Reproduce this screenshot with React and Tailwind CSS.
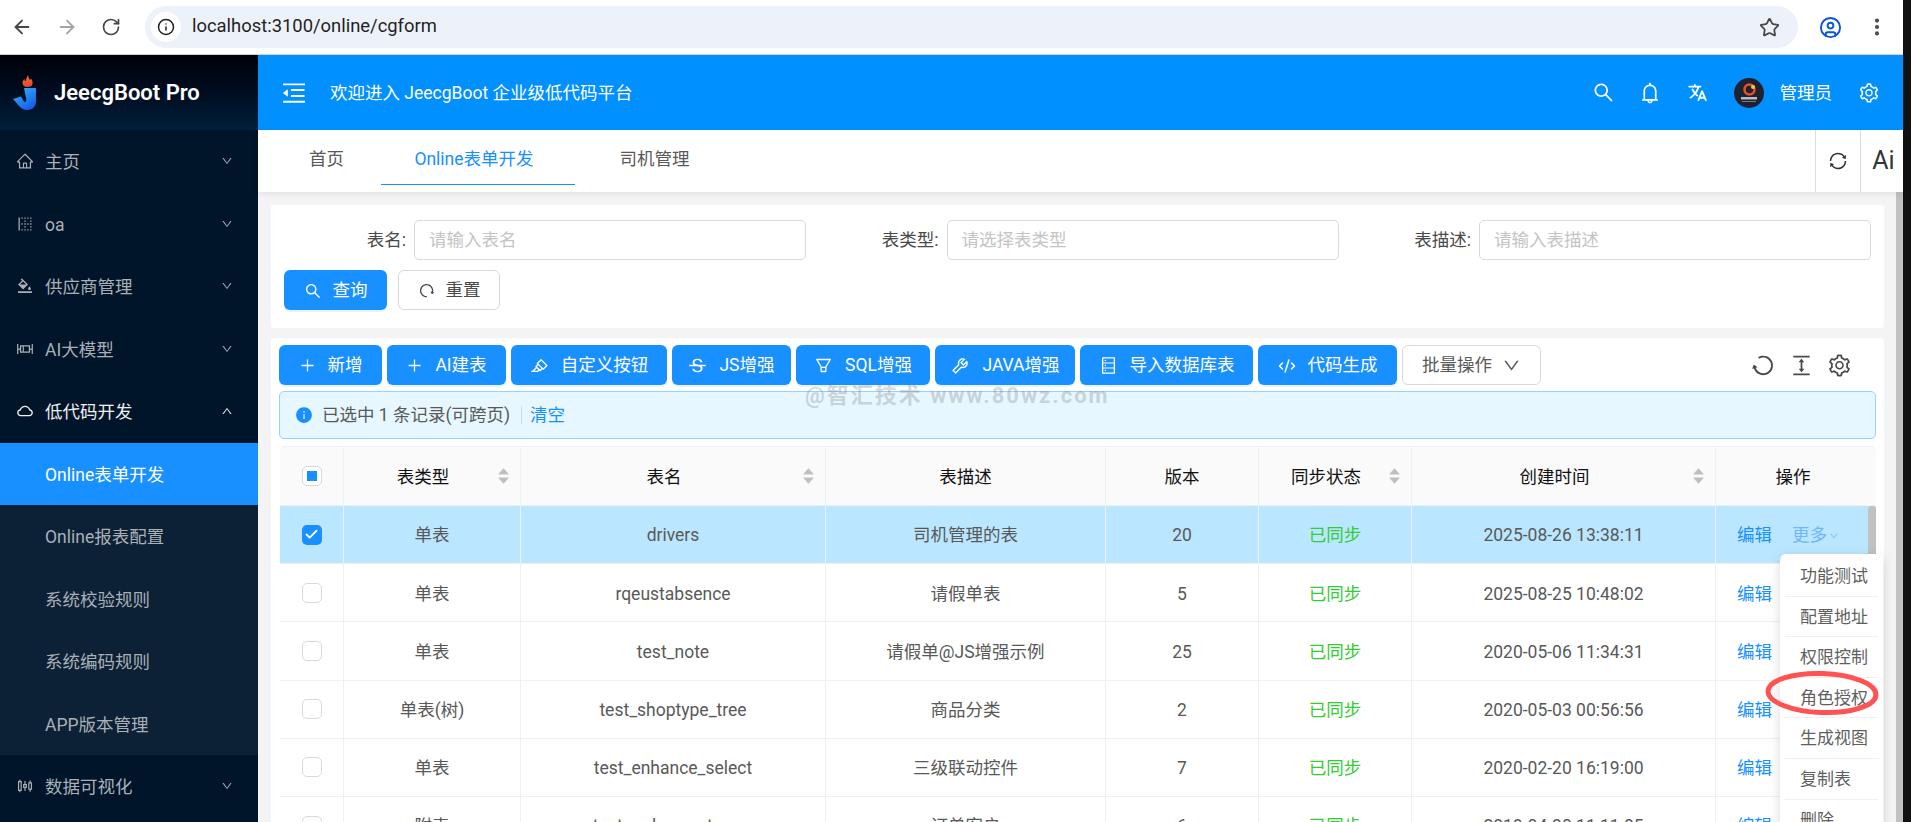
import React from "react";
import {
  AiOutlineHome, AiOutlineBorderLeft, AiOutlineBgColors, AiOutlineBoxPlot, AiOutlineCloud, AiOutlineSliders,
  AiOutlineDown, AiOutlineUp, AiOutlineSearch, AiOutlineBell, AiOutlineSetting, AiOutlineSync, AiOutlineMenuFold,
  AiOutlinePlus, AiOutlineHighlight, AiOutlineStrikethrough, AiOutlineFilter, AiOutlineTool,
  AiOutlineDatabase, AiOutlineRedo, AiOutlineColumnHeight, AiFillInfoCircle, AiFillCaretUp, AiFillCaretDown,
} from "react-icons/ai";
import { IoLanguage } from "react-icons/io5";
import { ArrowLeft, ArrowRight, RotateCw, Info, Star, CircleUser, EllipsisVertical, Check, CodeXml } from "lucide-react";

const menuTop = [
  { icon: AiOutlineHome, label: "主页" },
  { icon: AiOutlineBorderLeft, label: "oa" },
  { icon: AiOutlineBgColors, label: "供应商管理" },
  { icon: AiOutlineBoxPlot, label: "AI大模型" },
];
const subMenu = ["Online报表配置", "系统校验规则", "系统编码规则", "APP版本管理"];

const buttons = [
  { icon: AiOutlinePlus, label: "新增", w: "w-[103px]", s: "h-[17px] w-[17px]" },
  { icon: AiOutlinePlus, label: "AI建表", w: "w-[119px]", s: "h-[17px] w-[17px]" },
  { icon: AiOutlineHighlight, label: "自定义按钮", w: "w-[156px]", s: "h-[19px] w-[19px]" },
  { icon: AiOutlineStrikethrough, label: "JS增强", w: "w-[119px]", s: "h-[19px] w-[19px]" },
  { icon: AiOutlineFilter, label: "SQL增强", w: "w-[134px]", s: "h-[19px] w-[19px]" },
  { icon: AiOutlineTool, label: "JAVA增强", w: "w-[140px]", s: "h-[20px] w-[20px]" },
  { icon: AiOutlineDatabase, label: "导入数据库表", w: "w-[173px]", s: "h-[19px] w-[19px]" },
  { icon: CodeXml, label: "代码生成", w: "w-[139px]", s: "h-[18px] w-[18px]" },
];

const rows = [
  ["单表", "drivers", "司机管理的表", "20", "2025-08-26 13:38:11"],
  ["单表", "rqeustabsence", "请假单表", "5", "2025-08-25 10:48:02"],
  ["单表", "test_note", "请假单@JS增强示例", "25", "2020-05-06 11:34:31"],
  ["单表(树)", "test_shoptype_tree", "商品分类", "2", "2020-05-03 00:56:56"],
  ["单表", "test_enhance_select", "三级联动控件", "7", "2020-02-20 16:19:00"],
  ["附表", "test_order_customer", "订单客户", "6", "2019-04-30 11:11:05"],
];

const dropdown = ["功能测试", "配置地址", "权限控制", "角色授权", "生成视图", "复制表", "删除"];

const gridCols = "grid grid-cols-[64px_177px_305px_280px_153px_153px_304px_160px]";

function Logo() {
  return (
    <svg width="24" height="36" viewBox="0 0 24 36" className="shrink-0">
      <defs>
        <linearGradient id="jg" x1="0" y1="0" x2="0.6" y2="1">
          <stop offset="0" stopColor="#38b6ff" />
          <stop offset="1" stopColor="#1560e8" />
        </linearGradient>
        <linearGradient id="fg" x1="0" y1="0" x2="0" y2="1">
          <stop offset="0" stopColor="#f0703a" />
          <stop offset="1" stopColor="#e8452c" />
        </linearGradient>
      </defs>
      <path d="M16 0c.5 3 1 3.500 2 5 .5-.5.7-1 .8-1.500 1.700 1.700 2.200 4 1.500 6-.7 1.800-2.300 2.500-4.800 2.500s-4.500-1-5-3.500c-.3-2 .7-3.500 2-4.500 0 1.300.3 2 1 2.200C14 4 15 2 16 0z" fill="url(#fg)" />
      <path d="M12 13h12v13c0 5.500-3.500 9-8.500 9-3.500 0-6-1.500-8-3.500L1 24l8-2.500 3 5c1 1 2.500 0 2.300-2L12 13z" fill="url(#jg)" />
    </svg>
  );
}

function Avatar() {
  return (
    <svg width="30" height="30" viewBox="0 0 30 30" className="block shrink-0">
      <circle cx="15" cy="15" r="15" fill="#1d2130" />
      <circle cx="15.500" cy="11.500" r="5" fill="none" stroke="#e8502a" strokeWidth="2.500" />
      <circle cx="19" cy="9" r="2" fill="#f6c944" />
      <rect x="7" y="19" width="16" height="2.500" fill="#b9bcc4" />
      <rect x="8" y="23" width="14" height="1" fill="#777b86" />
    </svg>
  );
}

function Sorter() {
  return (
    <span className="absolute right-[9px] top-1/2 flex -translate-y-1/2 flex-col items-center text-[#bfbfbf]">
      <AiFillCaretUp className="-mb-[3px] h-[15px] w-[15px]" />
      <AiFillCaretDown className="-mt-[3px] h-[15px] w-[15px]" />
    </span>
  );
}

function HeadCell({ children, sort, offset }) {
  return (
    <div className="relative flex items-center justify-center border-r border-[#f0f0f0] pt-[2px] font-normal text-[#111] last:border-r-0">
      <span className={offset}>{children}</span>
      {sort && <Sorter />}
    </div>
  );
}

function Cell({ children, className = "" }) {
  return (
    <div className={`flex items-center justify-center border-r border-[#f0f0f0] pt-[2px] ${className}`}>{children}</div>
  );
}

function FormItem({ label, placeholder }) {
  return (
    <div className="flex w-[532.5px] items-center">
      <label className="w-[133px] whitespace-nowrap pr-[8px] text-right text-[#4a4a4a]">{label}:</label>
      <div className="flex h-[40px] w-[392px] items-center rounded-[5px] border border-[#d9d9d9] bg-white px-[14px] pt-[1px] text-[#c4c4c4]">
        {placeholder}
      </div>
    </div>
  );
}

export default function App() {
  return (
    <div className="relative flex h-[822px] w-full overflow-hidden bg-[#111] font-['Roboto','Noto_Sans_CJK_SC',sans-serif] text-[17.5px] text-[#595959]">
      <div className="flex w-[1903px] shrink-0 flex-col">
        {/* browser chrome */}
        <div className="flex h-[55px] shrink-0 items-center border-b border-[#d3d3d3] bg-white">
          <div className="flex w-[145px] shrink-0 items-center pl-[11px] text-[#474747]">
            <ArrowLeft className="h-[22px] w-[22px]" strokeWidth={2} />
            <ArrowRight className="ml-[23px] h-[22px] w-[22px] text-[#a5a5a5]" strokeWidth={2} />
            <RotateCw className="ml-[23px] h-[20px] w-[20px]" strokeWidth={2} />
          </div>
          <div className="flex h-[42px] w-[1653px] items-center rounded-full bg-[#edf2fa] pl-[6px] pr-[18px]">
            <span className="flex h-[30px] w-[30px] items-center justify-center rounded-full bg-white text-[#1f1f1f]">
              <Info className="h-[18px] w-[18px]" strokeWidth={2} />
            </span>
            <span className="ml-[11px] pb-[2px] text-[18.4px] text-[#1f1f1f]">localhost:3100/online/cgform</span>
            <Star className="ml-auto h-[21px] w-[21px] text-[#474747]" strokeWidth={2} />
          </div>
          <CircleUser className="ml-[21px] h-[23px] w-[23px] text-[#0b57d0]" strokeWidth={2} />
          <EllipsisVertical className="ml-[24px] h-[22px] w-[22px] text-[#474747]" strokeWidth={2.500} />
        </div>

        <div className="flex min-h-0 flex-1">
          {/* sidebar */}
          <aside className="flex w-[258px] shrink-0 flex-col bg-[#001529] text-[#a9b0b8]">
            <div className="flex h-[75px] shrink-0 items-center bg-gradient-to-b from-[#000208] to-[#011f3c] pl-[12px]">
              <Logo />
              <span className="ml-[18px] text-[22px] font-semibold text-white">JeecgBoot Pro</span>
            </div>
            {menuTop.map((m) => (
              <div key={m.label} className="flex h-[62.5px] shrink-0 items-center pl-[16px] pr-[25px]">
                <m.icon className="h-[18px] w-[18px]" />
                <span className="ml-[11px] pt-[2px]">{m.label}</span>
                <AiOutlineDown className="ml-auto h-[12px] w-[12px]" />
              </div>
            ))}
            <div className="flex h-[62.5px] shrink-0 items-center pl-[16px] pr-[25px] text-[#eef0f2]">
              <AiOutlineCloud className="h-[18px] w-[18px]" />
              <span className="ml-[11px] pt-[2px]">低代码开发</span>
              <AiOutlineUp className="ml-auto h-[12px] w-[12px]" />
            </div>
            <div className="bg-[#0c2135]">
              <div className="flex h-[62.5px] items-center bg-[#1890ff] pl-[45px] pt-[2px] text-white">Online表单开发</div>
              {subMenu.map((s) => (
                <div key={s} className="flex h-[62.5px] items-center pl-[45px] pt-[2px]">{s}</div>
              ))}
            </div>
            <div className="flex h-[62.5px] shrink-0 items-center pl-[16px] pr-[25px]">
              <AiOutlineSliders className="h-[18px] w-[18px]" />
              <span className="ml-[11px] pt-[2px]">数据可视化</span>
              <AiOutlineDown className="ml-auto h-[12px] w-[12px]" />
            </div>
          </aside>

          {/* main */}
          <div className="flex min-w-0 flex-1 flex-col">
            <header className="flex h-[75px] shrink-0 items-center bg-[#0090ff] text-white">
              <AiOutlineMenuFold className="ml-[22px] h-[28px] w-[28px]" />
              <span className="ml-[22px] pt-[1px]">欢迎进入 JeecgBoot 企业级低代码平台</span>
              <div className="ml-auto flex items-center pr-[23px]">
                <AiOutlineSearch className="h-[23px] w-[23px]" />
                <AiOutlineBell className="ml-[23px] h-[24px] w-[24px]" />
                <IoLanguage className="ml-[25px] h-[21px] w-[21px]" />
                <span className="ml-[26px]"><Avatar /></span>
                <span className="ml-[16px] pt-[1px]">管理员</span>
                <AiOutlineSetting className="ml-[26px] h-[22px] w-[22px]" />
              </div>
            </header>

            {/* tabs */}
            <div className="relative z-10 flex h-[62px] shrink-0 items-stretch bg-white pl-[14px] shadow-[0_2px_6px_rgba(0,0,0,0.08)]">
              <div className="flex h-[55px] w-[109px] items-center justify-center pt-[4px] text-[#595959]">首页</div>
              <div className="flex h-[55px] w-[194px] items-center justify-center border-b border-[#1890ff] pt-[4px]">
                <span className="-ml-[8px] text-[#1890ff]">Online表单开发</span>
              </div>
              <div className="flex h-[55px] w-[159px] items-center justify-center pt-[4px] text-[#595959]">司机管理</div>
              <div className="ml-auto flex w-[45px] items-center justify-center border-l border-[#dcdcdc] text-[#333]">
                <AiOutlineSync className="h-[20px] w-[20px]" />
              </div>
              <div className="flex w-[43px] items-center justify-center border-l border-[#dcdcdc] pl-[3px] text-[25px] text-[#333]">Ai</div>
            </div>

            <div className="flex min-h-0 flex-1 bg-[#f4f4f4]">
              <div className="flex min-w-0 flex-1 flex-col pl-[13px] pr-[12px] pt-[13px]">
                {/* search card */}
                <div className="h-[123px] shrink-0 rounded-[3px] bg-white">
                  <div className="flex pl-[10px] pt-[15px]">
                    <FormItem label="表名" placeholder="请输入表名" />
                    <FormItem label="表类型" placeholder="请选择表类型" />
                    <FormItem label="表描述" placeholder="请输入表描述" />
                  </div>
                  <div className="mt-[10px] flex gap-[11px] pl-[13px]">
                    <button className="flex h-[40px] w-[103px] items-center justify-center gap-[11px] rounded-[6px] bg-[#1890ff] pt-[1px] text-white shadow-[0_2px_0_rgba(5,145,255,0.1)]">
                      <AiOutlineSearch className="h-[18px] w-[18px]" />查询
                    </button>
                    <button className="flex h-[40px] w-[102px] items-center justify-center gap-[11px] rounded-[6px] border border-[#d9d9d9] bg-white pt-[1px] text-[#4a4a4a]">
                      <AiOutlineRedo className="h-[17px] w-[17px] -rotate-[40deg]" />重置
                    </button>
                  </div>
                </div>

                {/* table card */}
                <div className="relative mt-[10px] min-h-0 flex-1 rounded-t-[3px] bg-white pl-[8px] pt-[7px]">
                  <div className="flex h-[40px] w-[1597px] items-center gap-[5px]">
                    {buttons.map((b) => (
                      <button key={b.label} className={`flex h-[40px] ${b.w} items-center justify-center gap-[12px] rounded-[6px] bg-[#1890ff] pt-[1px] text-white shadow-[0_2px_0_rgba(5,145,255,0.1)]`}>
                        <b.icon className={b.s} />
                        {b.label}
                      </button>
                    ))}
                    <button className="flex h-[40px] w-[139px] items-center justify-center gap-[10px] rounded-[6px] border border-[#d9d9d9] bg-white pt-[1px] text-[#595959]">
                      批量操作<AiOutlineDown className="h-[19px] w-[19px]" />
                    </button>
                    <div className="ml-auto flex items-center gap-[13px] pr-[24px] text-[#4a4a4a]">
                      <AiOutlineRedo className="h-[25px] w-[25px] rotate-[110deg]" />
                      <AiOutlineColumnHeight className="h-[25px] w-[25px]" />
                      <AiOutlineSetting className="h-[25px] w-[25px]" />
                    </div>
                  </div>

                  {/* alert */}
                  <div className="mt-[6px] flex h-[48px] w-[1597px] items-center rounded-[5px] border border-[#91d5ff] bg-[#e6f7ff] pl-[15px]">
                    <AiFillInfoCircle className="h-[18px] w-[18px] text-[#1890ff]" />
                    <span className="ml-[9px] pt-[1px] text-[#595959]">已选中 1 条记录(可跨页)</span>
                    <span className="ml-[11px] h-[18px] w-px bg-[#d9d9d9]" />
                    <span className="ml-[8px] pt-[1px] text-[#1890ff]">清空</span>
                  </div>

                  {/* table */}
                  <div className="relative ml-[1px] mt-[7px] w-[1596px]">
                    <div className={`${gridCols} h-[60px] rounded-t-[5px] border-t border-b border-[#f0f0f0] bg-[#fafafa]`}>
                      <HeadCell>
                        <span className="-mt-[2px] flex h-[20px] w-[20px] items-center justify-center rounded-[5px] border border-[#d9d9d9] bg-white">
                          <span className="h-[10px] w-[10px] bg-[#1890ff]" />
                        </span>
                      </HeadCell>
                      <HeadCell sort offset="-ml-[18px]">表类型</HeadCell>
                      <HeadCell sort offset="-ml-[18px]">表名</HeadCell>
                      <HeadCell>表描述</HeadCell>
                      <HeadCell>版本</HeadCell>
                      <HeadCell sort offset="-ml-[18px]">同步状态</HeadCell>
                      <HeadCell sort offset="-ml-[18px]">创建时间</HeadCell>
                      <HeadCell><span className="-ml-[6px]">操作</span></HeadCell>
                    </div>
                    {rows.map((r, i) => (
                      <div key={r[1]} className={`${gridCols} h-[58.2px] border-b border-[#f0f0f0] ${i === 0 ? "bg-[#bae7ff]" : "bg-white"}`}>
                        <Cell>
                          {i === 0 ? (
                            <span className="-mt-[2px] flex h-[20px] w-[20px] items-center justify-center rounded-[5px] bg-[#1890ff] text-white">
                              <Check className="h-[15px] w-[15px]" strokeWidth={3} />
                            </span>
                          ) : (
                            <span className="-mt-[2px] h-[20px] w-[20px] rounded-[5px] border border-[#d9d9d9] bg-white" />
                          )}
                        </Cell>
                        <Cell>{r[0]}</Cell>
                        <Cell>{r[1]}</Cell>
                        <Cell>{r[2]}</Cell>
                        <Cell>{r[3]}</Cell>
                        <Cell className="text-[#32cd32]">已同步</Cell>
                        <Cell>{r[4]}</Cell>
                        <div className="flex items-center pl-[21px] pt-[2px]">
                          <span className="text-[#1890ff]">编辑</span>
                          {i === 0 && (
                            <span className="ml-[20px] flex items-center gap-[2px] text-[#6fb6fb]">
                              更多<AiOutlineDown className="h-[10px] w-[10px]" />
                            </span>
                          )}
                        </div>
                      </div>
                    ))}
                    {/* table scrollbar */}
                    <div className="absolute right-0 top-[60px] h-[320px] w-[8px] rounded-t-[4px] bg-[#c1c1c1]" />

                    {/* dropdown */}
                    <div className="absolute left-[1500px] top-[108px] w-[103px] rounded-t-[6px] bg-white px-[5px] pt-[2px] text-[17px] text-[#5f5f5f] shadow-[0_3px_12px_rgba(0,0,0,0.15)]">
                      {dropdown.map((d, i) => (
                        <div key={d} className={`flex h-[40.6px] items-center pl-[15px] pt-[2px] ${i < dropdown.length - 1 ? "border-b border-[#f0f0f0]" : ""}`}>{d}</div>
                      ))}
                    </div>
                  </div>
                </div>
              </div>
              {/* page scrollbar */}
              <div className="w-[7px] shrink-0 bg-[#c1c1c1]" />
            </div>
          </div>
        </div>
      </div>

      {/* annotation over the picture */}
      <svg className="pointer-events-none absolute left-[1764px] top-[668px]" width="116" height="50" viewBox="0 0 116 50">
        <ellipse cx="58" cy="25" rx="54" ry="19.500" fill="none" stroke="#ff5252" strokeWidth="5" transform="rotate(2 58 25)" />
      </svg>
      {/* watermark */}
      <div className="pointer-events-none absolute left-[805px] top-[379px] whitespace-nowrap text-[22px] font-bold tracking-[2px] text-[rgba(120,120,120,0.3)]">
        @智汇技术 www.80wz.com
      </div>
    </div>
  );
}
